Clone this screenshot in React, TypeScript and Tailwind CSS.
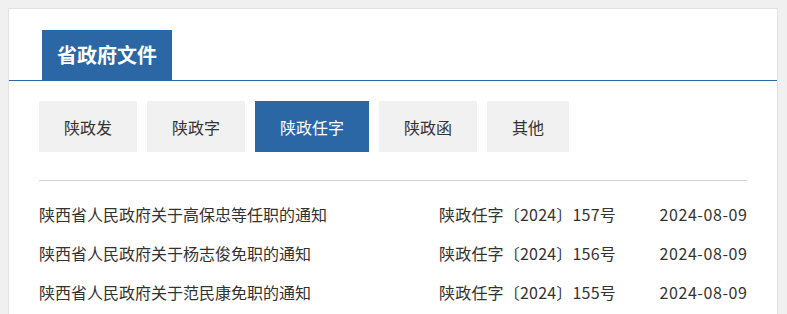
const font = { fontFamily: '"Microsoft YaHei", "Noto Sans CJK SC", sans-serif' };

const tabs = ["陕政发", "陕政字", "陕政任字", "陕政函", "其他"];

const docs = [
  { title: "陕西省人民政府关于高保忠等任职的通知", no: "陕政任字〔2024〕157号", date: "2024-08-09" },
  { title: "陕西省人民政府关于杨志俊免职的通知", no: "陕政任字〔2024〕156号", date: "2024-08-09" },
  { title: "陕西省人民政府关于范民康免职的通知", no: "陕政任字〔2024〕155号", date: "2024-08-09" },
];

export default function App() {
  return (
    <div className="w-[787px] h-[314px] overflow-hidden bg-[#f0f0f0] pt-2 pl-2" style={font}>
      <div className="w-[770px] h-[320px] bg-white border border-[#e2e2e2]">
        {/* ── Heading ── */}
        <div className="pt-[21px] pl-[33px] border-b border-[#2b66a5]">
          <div className="inline-flex h-[50px] items-center px-[15px] bg-[#2b66a5] text-white text-[20px] font-bold">
            省政府文件
          </div>
        </div>

        <div className="px-[30px]">
          {/* ── Tabs ── */}
          <div className="flex gap-[10px] pt-5 pb-7 border-b border-[#d4d4d4]">
            {tabs.map((t) => (
              <div
                key={t}
                className={
                  t === "陕政任字"
                    ? "h-[51px] px-[25px] flex items-center bg-[#2b66a5] text-white text-[16px]"
                    : "h-[51px] px-[25px] flex items-center bg-[#f1f1f1] text-[#333] text-[16px]"
                }
              >
                {t}
              </div>
            ))}
          </div>

          {/* ── Document list ── */}
          <div className="pt-[13px]">
            {docs.map((d) => (
              <div key={d.no} className="flex items-center h-[39px] text-[16px] text-[#333]">
                <div className="w-[400px] shrink-0">{d.title}</div>
                <div className="flex-1 tracking-[0.2px]">{d.no}</div>
                <div className="tracking-[0.6px] -mr-[0.6px]">{d.date}</div>
              </div>
            ))}
          </div>
        </div>
      </div>
    </div>
  );
}
